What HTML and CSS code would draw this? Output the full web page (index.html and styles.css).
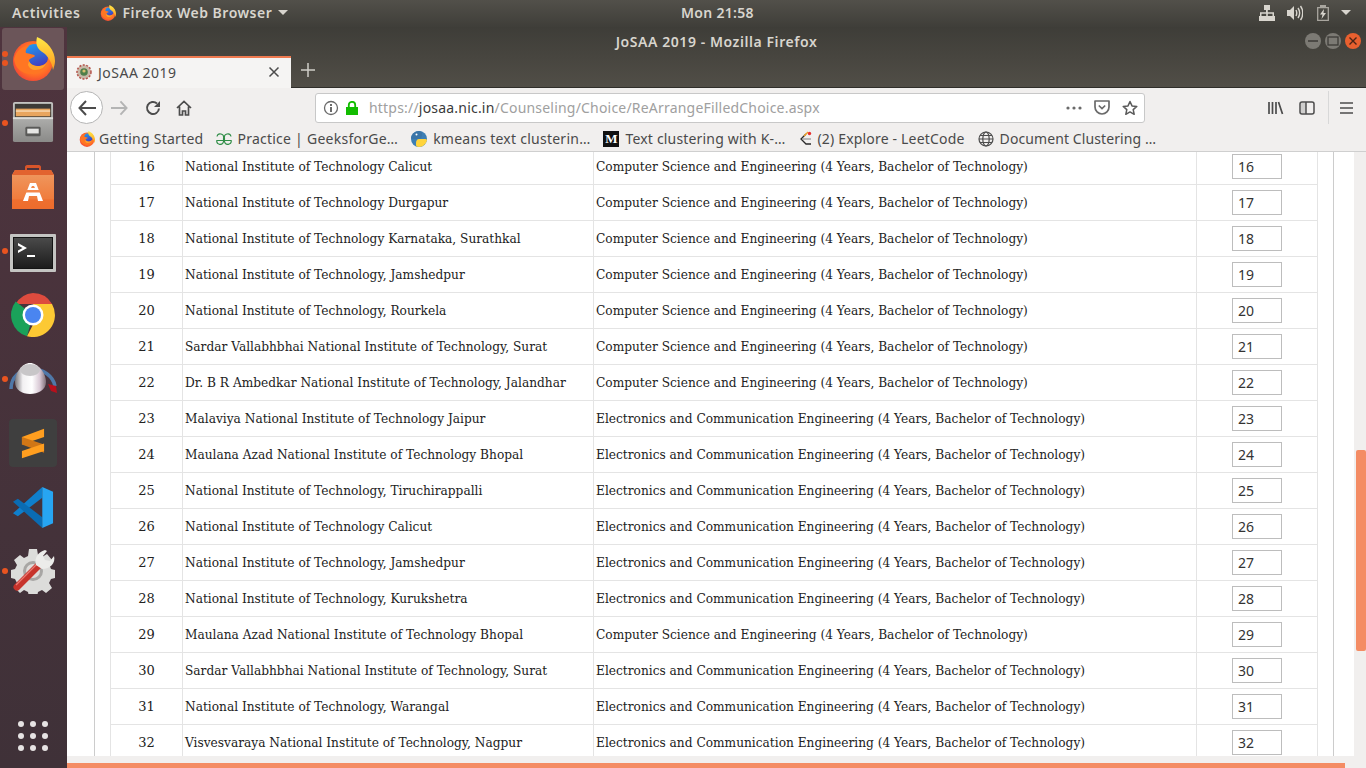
FILE: index.html
```html
<!DOCTYPE html>
<html lang="en">
<head>
<meta charset="utf-8">
<title>JoSAA 2019 - Mozilla Firefox</title>
<link rel="stylesheet" href="styles.css">
</head>
<body>
<svg class="defs" width="0" height="0" aria-hidden="true">
  <defs>
    <radialGradient id="fxO" cx="0.55" cy="0.45" r="0.7"><stop offset="0" stop-color="#ffb32c"/><stop offset="0.6" stop-color="#ff6a26"/><stop offset="1" stop-color="#e62f45"/></radialGradient>
    <linearGradient id="fxY" x1="0.5" y1="0" x2="0.5" y2="1"><stop offset="0" stop-color="#ffe847"/><stop offset="1" stop-color="#ff9a1f"/></linearGradient>
    <linearGradient id="fxB" x1="0.3" y1="0" x2="0.7" y2="1"><stop offset="0" stop-color="#1f9af0"/><stop offset="1" stop-color="#4a2fb5"/></linearGradient>
    <symbol id="firefox" viewBox="0 0 44 44">
      <circle cx="22" cy="24" r="20" fill="url(#fxO)"/>
      <circle cx="24" cy="20" r="13" fill="url(#fxB)"/>
      <path d="M26 0c10 4 18 13 18 24 0 3-1 6-2 9-1-7-4-12-8-16-2 -2-5-3-7-6-2-3-2-7-1-11z" fill="url(#fxY)"/>
      <path d="M3 22c2-8 8-13 15-13-2 2-4 4-3 7 3 1 8 1 9 3-2 2-6 2-6 5 1 4 6 6 11 5 4-1 7-3 8-6-1 8-8 14-17 14C11 37 4 31 3 22z" fill="#ff7623"/>
      <path d="M18 24c1 3 5 5 10 5 3 0 6-1 8-4-2 5-6 8-12 8-3 0-6-2-7-5z" fill="#ffa32a"/>
    </symbol>
    <symbol id="python" viewBox="0 0 16 16">
      <circle cx="8" cy="8" r="8" fill="#3d7fb4"/>
      <path d="M8 8h5.500c1.500 0 2.500.5 2.500 1-.5 3.500-4 7-8 7-2 0-3-1-3-2v-2c0-2 1-4 3-4z" fill="#ffd43b"/>
      <path d="M8 8H2.500C1 8 0 7.500 0 7c.5-4 4-7 8-7 2 0 3 1 3 2v2c0 2-1 4-3 4z" fill="#3a75a8"/>
      <circle cx="5.500" cy="3.500" r="1" fill="#fff"/>
    </symbol>
  </defs>
</svg>

<header class="panel">
  <div class="panel-left">
    <span class="activities">Activities</span>
    <span class="app-menu"><svg class="i16"><use href="#firefox"/></svg>Firefox Web Browser<i class="caret"></i></span>
  </div>
  <span class="clock">Mon 21:58</span>
  <div class="tray">
    <svg width="16" height="16" viewBox="0 0 16 16"><path fill="#d8d5ce" d="M5 0h6v5H8.800v2.200H15V11h1v5h-6v-5h3.500V8.700H8.800V11H11v5H5v-5h2.200V8.700H2.500V11H6v5H0v-5h1V7.200h6V5H5z"/></svg>
    <svg width="16" height="16" viewBox="0 0 16 16"><path fill="#d8d5ce" d="M0 5h3l4-4v14l-4-4H0z"/><path fill="none" stroke="#d8d5ce" stroke-width="1.400" d="M9 5c1 2 1 4 0 6M11 3c2 3 2 7 0 10M13.500 1c3 4 3 10 0 14"/></svg>
    <svg class="batt" width="12" height="16" viewBox="0 0 12 16"><path fill="none" stroke="#a9a69f" stroke-width="1.300" d="M.7 2.700h10.600v12.600H.7z"/><path fill="#a9a69f" d="M3 0h6v2H3z"/><path fill="#d8d5ce" d="M7 4 3 9.500h2.500L4.500 14 9 8H6.500z"/></svg>
    <i class="caret"></i>
  </div>
</header>

<div class="desktop">
  <nav class="dock">
    <div class="dock-item active"><i class="pip"></i><i class="pip pip2"></i>
      <svg class="i44"><use href="#firefox"/></svg></div>
    <div class="dock-item up"><i class="pip"></i>
      <svg width="42" height="42" viewBox="0 0 44 44"><defs><linearGradient id="cab" x1="0" y1="0" x2="0" y2="1"><stop offset="0" stop-color="#c4c4c2"/><stop offset="1" stop-color="#8a8a88"/></linearGradient></defs><rect x="1" y="1" width="42" height="42" rx="2" fill="url(#cab)"/><rect x="3" y="3" width="38" height="14" fill="#3d3a37"/><rect x="4" y="8" width="36" height="8" fill="#e8a55f"/><rect x="4" y="10" width="36" height="1" fill="#fff4e0"/><rect x="1" y="17" width="42" height="2" fill="#dcdcda"/><rect x="14" y="27" width="16" height="10" rx="1.500" fill="#5a5a58"/><rect x="16" y="29" width="12" height="5" fill="#e6e6e4"/></svg></div>
    <div class="dock-item">
      <svg width="42" height="44" viewBox="0 0 42 44"><defs><linearGradient id="bag" x1="0" y1="0" x2="0" y2="1"><stop offset="0" stop-color="#ef9a62"/><stop offset="0.75" stop-color="#f07c3c"/><stop offset="0.76" stop-color="#ee6f30"/><stop offset="1" stop-color="#ee6c2c"/></linearGradient></defs><path d="M13 7V2c0-1 1-2 2-2h12c1 0 2 1 2 2v5h-2V3H15v4z" fill="#d8552a"/><path d="M3 5h36l3 5v34H0V10z" fill="url(#bag)"/><path d="M0 10h42l-3-5H3z" fill="#e2632f"/><path d="M18 18h6l7 18h-5l-1-5H17l-1 5h-5z" fill="#fff"/><path d="M14 25h14v2.500H14z" fill="#f4874a"/><path d="M20 21h2l1 2h-4z" fill="#f4874a"/></svg></div>
    <div class="dock-item down"><i class="pip"></i>
      <svg width="46" height="38" viewBox="0 0 46 38"><defs><linearGradient id="term" x1="0" y1="0" x2="0" y2="1"><stop offset="0" stop-color="#4a4a4a"/><stop offset="1" stop-color="#1c1c1c"/></linearGradient></defs><rect width="46" height="38" rx="1" fill="#c4c4c2"/><rect x="3" y="3" width="40" height="32" fill="#141414"/><rect x="4" y="4" width="38" height="30" fill="url(#term)"/><path d="M8 9l9 5-9 5v-2.500L12.500 14 8 11.500z" fill="#fff"/><rect x="17" y="21" width="8" height="2" fill="#fff"/></svg></div>
    <div class="dock-item">
      <svg width="44" height="44" viewBox="0 0 44 44"><path d="M22 0a22 22 0 0 1 19 11H22L4.700 11A22 22 0 0 1 22 0z" fill="#dd4b3e"/><path d="M4.700 8.500 22 22 16 43.200A22 22 0 0 1 4.700 8.500z" fill="#1aa25a"/><path d="M41 11a22 22 0 0 1-25 32.200L27 22 22 11z" fill="#fcc934"/><circle cx="22" cy="22" r="10.500" fill="#fff"/><circle cx="22" cy="22" r="8" fill="#4a85f0"/></svg></div>
    <div class="dock-item"><i class="pip"></i>
      <svg width="50" height="36" viewBox="0 0 50 36"><defs><linearGradient id="knob" x1="0" y1="0" x2="1" y2="0"><stop offset="0" stop-color="#77757a"/><stop offset="0.25" stop-color="#f2f0f2"/><stop offset="0.55" stop-color="#ffffff"/><stop offset="0.8" stop-color="#d8c8d4"/><stop offset="1" stop-color="#7e7078"/></linearGradient></defs><path d="M3 28C3 16 12 8 24 8c11 0 21 7 23 17" fill="none" stroke="#4f78a8" stroke-width="3.500"/><path d="M40 23l8 2 1 7-6-2z" fill="#b8101c"/><path d="M7 21c0-9 7-19 15-19s16 10 16 19c0 8-8 12-16 12S7 29 7 21z" fill="url(#knob)"/><ellipse cx="22" cy="9" rx="10" ry="6" fill="#c8c6c8"/></svg></div>
    <div class="dock-item">
      <div class="sublime"><svg width="24" height="31" viewBox="0 0 26 32"><path d="M25 0v9L1 17V9z" fill="#ff9e1f"/><path d="M1 9l24 8v9L1 17z" fill="#d07616"/><path d="M25 16v8L1 32v-8z" fill="#ff9e1f"/></svg></div></div>
    <div class="dock-item">
      <svg width="43" height="43" viewBox="0 0 44 44"><path d="M31 1v11L6 31l-5-3z" fill="#0f7fcc"/><path d="M1 16l5-3 25 19v11z" fill="#0a6cb3"/><path d="M31 1 42 6v32l-11 5z" fill="#27a5f2"/></svg></div>
    <div class="dock-item"><i class="pip"></i>
      <svg width="46" height="46" viewBox="0 0 46 46"><path d="M19 1h8l1 6 4 2 5-3 5 6-3 4 2 5 4 1v8l-4 1-2 4 3 5-6 5-4-3-4 2-1 5h-8l-1-5-4-2-4 3-6-6 3-4-2-4-4-1v-8l4-1 2-4-3-5 6-5 4 3 4-2z" fill="#dcdcda"/><circle cx="23" cy="23" r="10" fill="#a8a6a4"/><circle cx="23" cy="23" r="7" fill="#dedcda"/><path d="M7 39 29 17" stroke="#c7332b" stroke-width="7" stroke-linecap="round"/><path d="M6 37 27 16" stroke="#ea7a72" stroke-width="1.300"/><path d="M26 17c-2-7 2-13 9-15l2 1-4 5 2 4 5 1 4-5c2 7-4 13-12 13z" fill="#ececea"/></svg></div>
    <div class="apps-grid"><i></i><i></i><i></i><i></i><i></i><i></i><i></i><i></i><i></i></div>
  </nav>

  <div class="window">
    <div class="titlebar">
      <span class="wintitle">JoSAA 2019 - Mozilla Firefox</span>
      <div class="winbtns">
        <span class="wb"><svg width="16" height="16" viewBox="0 0 16 16"><path d="M3 8h10" stroke="#3c3b37" stroke-width="1.500"/></svg></span>
        <span class="wb"><svg width="16" height="16" viewBox="0 0 16 16"><rect x="3" y="4" width="10" height="8" fill="none" stroke="#3c3b37" stroke-width="1.300"/></svg></span>
        <span class="wb close"><svg width="16" height="16" viewBox="0 0 16 16"><path d="M4.500 4.500l7 7M11.500 4.500l-7 7" stroke="#4a2416" stroke-width="1.400"/></svg></span>
      </div>
    </div>
    <div class="tabstrip">
      <div class="tab">
        <svg class="fav" width="16" height="16" viewBox="0 0 16 16"><circle cx="8" cy="8" r="7" fill="#c9b8a8"/><circle cx="8" cy="8" r="7" fill="none" stroke="#b5524a" stroke-width="1.500" stroke-dasharray="2 1.500"/><circle cx="8" cy="8" r="3.800" fill="#4f7f4a"/><circle cx="8" cy="7" r="1.600" fill="#d9c070"/></svg>
        <span class="tab-title">JoSAA 2019</span>
        <svg class="tab-x" width="12" height="12" viewBox="0 0 12 12"><path d="M1.500 1.500l9 9M10.500 1.500l-9 9" stroke="#4c4c4c" stroke-width="1.500"/></svg>
      </div>
      <svg class="newtab" width="14" height="14" viewBox="0 0 14 14"><path d="M7 0v14M0 7h14" stroke="#d0cec8" stroke-width="1.500"/></svg>
    </div>
    <div class="navbar">
      <span class="back"><svg width="18" height="16" viewBox="0 0 18 16"><path d="M8 1 1.500 8 8 15M2 8h16" fill="none" stroke="#4c4c4c" stroke-width="2"/></svg></span>
      <svg class="fwd" width="17" height="16" viewBox="0 0 18 16"><path d="M10 1l6.500 7L10 15M16 8H0" fill="none" stroke="#b4b4b4" stroke-width="2"/></svg>
      <svg class="reload" width="16" height="16" viewBox="0 0 16 16"><path d="M14 8.500A6 6 0 1 1 12 3.500" fill="none" stroke="#4c4c4c" stroke-width="2"/><path d="M15 1v6H9z" fill="#4c4c4c"/></svg>
      <svg class="home" width="16" height="16" viewBox="0 0 16 16"><path d="M1 8 8 1.500 15 8M3.500 6.500V15h3v-4h3v4h3V6.500" fill="none" stroke="#4c4c4c" stroke-width="1.700"/></svg>
      <div class="urlbar">
        <svg class="info" width="16" height="16" viewBox="0 0 16 16"><circle cx="8" cy="8" r="6.500" fill="none" stroke="#6a6a6a" stroke-width="1.300"/><path d="M7 7h2v5H7zM7 4h2v2H7z" fill="#6a6a6a"/></svg>
        <svg class="lock" width="12" height="14" viewBox="0 0 12 14"><path d="M0 6h12v8H0z" fill="#12bc00"/><path d="M2.800 6.500V4a3.200 3.200 0 0 1 6.400 0v2.500" fill="none" stroke="#12bc00" stroke-width="1.800"/></svg>
        <span class="url"><span class="url-dim">https://</span><span class="url-host">josaa.nic.in</span><span class="url-dim">/Counseling/Choice/ReArrangeFilledChoice.aspx</span></span>
        <svg class="more" width="16" height="4" viewBox="0 0 16 4"><circle cx="2" cy="2" r="1.600" fill="#6a6a6a"/><circle cx="8" cy="2" r="1.600" fill="#6a6a6a"/><circle cx="14" cy="2" r="1.600" fill="#6a6a6a"/></svg>
        <svg class="pocket" width="16" height="15" viewBox="0 0 16 15"><path d="M1 1h14v6a7 7 0 0 1-14 0z" fill="none" stroke="#6a6a6a" stroke-width="1.700" stroke-linejoin="round"/><path d="M4.800 5.500 8 8.500l3.200-3" fill="none" stroke="#6a6a6a" stroke-width="1.700"/></svg>
        <svg class="star" width="16" height="16" viewBox="0 0 16 16"><path d="M8 1.500l2 4.400 4.800.5-3.600 3.200 1 4.700L8 11.900l-4.200 2.400 1-4.700L1.200 6.400 6 5.900z" fill="none" stroke="#5a5a5a" stroke-width="1.500" stroke-linejoin="round"/></svg>
      </div>
      <div class="nav-right">
        <svg width="16" height="14" viewBox="0 0 16 14"><path d="M1 1v12M4.500 1v12M8 1v12M10.500 1l4 12" fill="none" stroke="#4c4c4c" stroke-width="1.700"/></svg>
        <svg width="16" height="14" viewBox="0 0 16 14"><rect x="1" y="1" width="14" height="12" rx="2" fill="none" stroke="#4c4c4c" stroke-width="1.500"/><path d="M2 2h5v10H2z" fill="#4c4c4c" opacity="0.2"/><path d="M7 1v12" stroke="#4c4c4c" stroke-width="1.500"/></svg>
        <i class="nav-sep"></i>
        <svg width="13" height="12" viewBox="0 0 13 12"><path d="M0 1h13M0 6h13M0 11h13" stroke="#4c4c4c" stroke-width="1.700"/></svg>
      </div>
    </div>
    <div class="bookmarks">
      <span class="bm"><svg class="i16"><use href="#firefox"/></svg>Getting Started</span>
      <span class="bm bm-5"><svg width="16" height="16" viewBox="0 0 16 16"><g fill="none" stroke="#2f8d46" stroke-width="1.100"><path d="M1 5.500A3.300 3.300 0 0 1 7.500 7v3.500A3.300 3.300 0 0 1 .8 9.500H7"/><path d="M15 5.500A3.300 3.300 0 0 0 8.500 7v3.500a3.300 3.300 0 0 0 6.700-1H9"/></g></svg>Practice | GeeksforGe…</span>
      <span class="bm bm-6"><svg class="i16"><use href="#python"/></svg>kmeans text clusterin…</span>
      <span class="bm bm-6 bm-snug"><span class="medium">M</span>Text clustering with K-…</span>
      <span class="bm bm-3 bm-snug"><svg width="16" height="16" viewBox="0 0 16 16"><path d="M8 3 3 8l5 5h5" fill="none" stroke="#2a2a2a" stroke-width="1.300"/><path d="M5 8h8" stroke="#999" stroke-width="1.300"/><path d="M10 1 6 5" stroke="#f0a020" stroke-width="1.300"/><circle cx="11.500" cy="2.500" r="1.700" fill="#e83030"/></svg>(2) Explore - LeetCode</span>
      <span class="bm bm-6 bm-tight"><svg width="16" height="16" viewBox="0 0 16 16"><g fill="none" stroke="#4c4c4c" stroke-width="1.200"><circle cx="8" cy="8" r="7"/><ellipse cx="8" cy="8" rx="3.200" ry="7"/><path d="M1 8h14M2 4.500h12M2 11.500h12"/></g></svg>Document Clustering …</span>
    </div>
    <div class="viewport">
      <div class="page">
        <div class="panel-box">
          <table class="choices">
            <colgroup><col class="c-no"><col class="c-inst"><col class="c-prog"><col class="c-pri"></colgroup>
            <tbody>
              <tr><td class="no">16</td><td>National Institute of Technology Calicut</td><td>Computer Science and Engineering (4 Years, Bachelor of Technology)</td><td class="pri"><span class="box">16</span></td></tr>
              <tr><td class="no">17</td><td>National Institute of Technology Durgapur</td><td>Computer Science and Engineering (4 Years, Bachelor of Technology)</td><td class="pri"><span class="box">17</span></td></tr>
              <tr><td class="no">18</td><td>National Institute of Technology Karnataka, Surathkal</td><td>Computer Science and Engineering (4 Years, Bachelor of Technology)</td><td class="pri"><span class="box">18</span></td></tr>
              <tr><td class="no">19</td><td>National Institute of Technology, Jamshedpur</td><td>Computer Science and Engineering (4 Years, Bachelor of Technology)</td><td class="pri"><span class="box">19</span></td></tr>
              <tr><td class="no">20</td><td>National Institute of Technology, Rourkela</td><td>Computer Science and Engineering (4 Years, Bachelor of Technology)</td><td class="pri"><span class="box">20</span></td></tr>
              <tr><td class="no">21</td><td>Sardar Vallabhbhai National Institute of Technology, Surat</td><td>Computer Science and Engineering (4 Years, Bachelor of Technology)</td><td class="pri"><span class="box">21</span></td></tr>
              <tr><td class="no">22</td><td>Dr. B R Ambedkar National Institute of Technology, Jalandhar</td><td>Computer Science and Engineering (4 Years, Bachelor of Technology)</td><td class="pri"><span class="box">22</span></td></tr>
              <tr><td class="no">23</td><td>Malaviya National Institute of Technology Jaipur</td><td>Electronics and Communication Engineering (4 Years, Bachelor of Technology)</td><td class="pri"><span class="box">23</span></td></tr>
              <tr><td class="no">24</td><td>Maulana Azad National Institute of Technology Bhopal</td><td>Electronics and Communication Engineering (4 Years, Bachelor of Technology)</td><td class="pri"><span class="box">24</span></td></tr>
              <tr><td class="no">25</td><td>National Institute of Technology, Tiruchirappalli</td><td>Electronics and Communication Engineering (4 Years, Bachelor of Technology)</td><td class="pri"><span class="box">25</span></td></tr>
              <tr><td class="no">26</td><td>National Institute of Technology Calicut</td><td>Electronics and Communication Engineering (4 Years, Bachelor of Technology)</td><td class="pri"><span class="box">26</span></td></tr>
              <tr><td class="no">27</td><td>National Institute of Technology, Jamshedpur</td><td>Electronics and Communication Engineering (4 Years, Bachelor of Technology)</td><td class="pri"><span class="box">27</span></td></tr>
              <tr><td class="no">28</td><td>National Institute of Technology, Kurukshetra</td><td>Electronics and Communication Engineering (4 Years, Bachelor of Technology)</td><td class="pri"><span class="box">28</span></td></tr>
              <tr><td class="no">29</td><td>Maulana Azad National Institute of Technology Bhopal</td><td>Computer Science and Engineering (4 Years, Bachelor of Technology)</td><td class="pri"><span class="box">29</span></td></tr>
              <tr><td class="no">30</td><td>Sardar Vallabhbhai National Institute of Technology, Surat</td><td>Electronics and Communication Engineering (4 Years, Bachelor of Technology)</td><td class="pri"><span class="box">30</span></td></tr>
              <tr><td class="no">31</td><td>National Institute of Technology, Warangal</td><td>Electronics and Communication Engineering (4 Years, Bachelor of Technology)</td><td class="pri"><span class="box">31</span></td></tr>
              <tr><td class="no">32</td><td>Visvesvaraya National Institute of Technology, Nagpur</td><td>Electronics and Communication Engineering (4 Years, Bachelor of Technology)</td><td class="pri"><span class="box">32</span></td></tr>
            </tbody>
          </table>
        </div>
      </div>
      <div class="scrollbar"><i class="thumb"></i></div>
    </div>
    <div class="hbar"><i class="hthumb"></i></div>
  </div>
</div>
</body>
</html>
```

FILE: styles.css
```css
* { box-sizing: border-box; }
html, body { margin: 0; padding: 0; height: 100%; overflow: hidden; }
body {
  width: 1366px; height: 768px; display: flex; flex-direction: column;
  font-family: "Noto Sans", "Open Sans", sans-serif; background: #3c3b37;
}
i { display: block; font-style: normal; }
svg { display: block; flex: none; }
.defs { position: absolute; }
.i16 { width: 16px; height: 16px; }
.i44 { width: 44px; height: 44px; }

.panel {
  height: 27px; flex: none; display: flex; align-items: center; justify-content: space-between;
  position: relative; padding: 0 15px 2px 12px; color: #d8d5ce;
  background: linear-gradient(#52504a, #3f3e39); font-size: 14px; font-weight: 600; letter-spacing: .3px;
}
.panel-left { display: flex; align-items: center; gap: 20px; }
.activities { letter-spacing: .6px; }
.app-menu { display: flex; align-items: center; gap: 6px; letter-spacing: .5px; }
.caret { width: 0; height: 0; border-left: 5px solid transparent; border-right: 5px solid transparent; border-top: 5px solid #d8d5ce; }
.clock { position: absolute; left: 681px; top: 3px; }
.tray { display: flex; align-items: center; gap: 12px; }
.tray .batt { margin-left: 2px; }

.desktop { flex: 1; display: flex; min-height: 0; }
.dock {
  width: 67px; flex: none; display: flex; flex-direction: column; align-items: flex-start;
  padding: 1px 0 0 2px; position: relative; background: linear-gradient(#4f343e, #3f3138);
}
.dock-item { width: 62px; height: 62px; margin-bottom: 2px; display: flex; align-items: center; justify-content: center; position: relative; flex: none; border-radius: 3px; }
.dock-item.active { background: #6b5559; }
.dock-item.up svg { margin-bottom: 2px; }
.dock-item.down svg { margin-top: 4px; }
.pip { position: absolute; left: 0; top: 28px; width: 6px; height: 6px; border-radius: 50%; background: #e95420; }
.dock-item.active .pip { top: 23px; }
.dock-item.active .pip2 { top: 32px; }
.sublime { width: 48px; height: 48px; border-radius: 4px; background: #3f3f3f; display: flex; align-items: center; justify-content: center; }
.apps-grid { position: absolute; left: 18px; bottom: 17px; display: grid; grid-template-columns: repeat(3, 6px); gap: 6px; }
.apps-grid i { width: 6px; height: 6px; border-radius: 50%; background: #e6e3e3; }

.window { flex: 1; min-width: 0; display: flex; flex-direction: column; background: #f1efee; }
.titlebar {
  height: 29px; flex: none; display: flex; align-items: center; justify-content: center; position: relative;
  background: linear-gradient(#3e3d38, #47453f); color: #d8d5ce; font-size: 14px; font-weight: 600;
}
.wintitle { letter-spacing: .57px; }
.winbtns { position: absolute; right: 5px; top: 6px; display: flex; gap: 4px; }
.wb { width: 16px; height: 16px; border-radius: 50%; background: #7c7a74; }
.wb.close { background: #e9602f; }
.tabstrip {
  height: 32px; flex: none; display: flex; align-items: stretch;
  background: linear-gradient(#47453f, #514e47); border-bottom: 1px solid #2f2e2a;
}
.tab {
  width: 224px; margin-bottom: -1px; display: flex; align-items: center; background: #f5f4f3;
  border-top: 2px solid #ef7a50; padding: 0 11px 2px 9px; color: #4a4a4a; font-size: 14px;
}
.fav { margin-right: 6px; }
.tab-title { flex: 1; letter-spacing: .5px; }
.newtab { margin: 7px 0 0 10px; }
.navbar { height: 37px; flex: none; display: flex; align-items: center; padding: 2px 13px 0 3px; background: #f1efee; }
.back {
  width: 33px; height: 33px; border-radius: 50%; background: #fff; border: 1px solid #b5b5b5;
  display: flex; align-items: center; justify-content: center; flex: none;
}
.fwd { margin-left: 8px; }
.reload { margin-left: 17px; }
.home { margin-left: 15px; }
.urlbar {
  width: 830px; height: 30px; margin-left: 123px; display: flex; align-items: center;
  background: #fff; border: 1px solid #c8c8c8; border-radius: 3px; padding: 0 6px 0 7px;
}
.lock { margin-left: 7px; }
.url { flex: 1; margin-left: 11px; font-size: 14px; white-space: nowrap; letter-spacing: .2px; }
.url-dim { color: #a0a0a0; }
.url-host { color: #3a3a3a; }
.more { margin-right: 12px; }
.pocket { margin-right: 12px; }
.nav-right { margin-left: auto; display: flex; align-items: center; gap: 15px; }
.nav-sep { width: 1px; height: 33px; background: #d8d8d8; margin: 0 -4px 0 -2px; }
.bookmarks {
  height: 27px; flex: none; display: flex; align-items: center; gap: 13px; padding: 1px 0 0 12px;
  background: #f1efee; border-bottom: 1px solid #cfcfcf; color: #4a4a4a; font-size: 14px; letter-spacing: .25px; white-space: nowrap;
}
.bm { display: flex; align-items: center; gap: 4px; }
.bm-3 { gap: 3px; }
.bm-5 { gap: 5px; }
.bm-6 { gap: 6px; }
.bm-snug { letter-spacing: .18px; }
.bm-tight { letter-spacing: .1px; }
.medium { width: 16px; height: 16px; background: #111; color: #fff; font-family: "Liberation Serif", serif; font-weight: 700; font-size: 13px; line-height: 16px; text-align: center; letter-spacing: 0; }

.viewport { flex: 1; min-height: 0; display: flex; background: #fff; overflow: hidden; }
.page { flex: 1; min-width: 0; padding: 0 20px 0 27px; }
.panel-box { height: 100%; overflow: hidden; border-left: 1px solid #ccc; border-right: 1px solid #ccc; padding: 0 15px; }
.choices {
  width: 1208px; margin-top: -4px; table-layout: fixed; border-collapse: collapse;
  font-family: "DejaVu Serif", serif; font-size: 12.2px; color: #222;
}
.c-no { width: 72px; }
.c-inst { width: 411px; }
.c-prog { width: 603px; }
.c-pri { width: 121px; }
.choices td { height: 36px; padding: 0 2px; border: 1px solid #e4e4e4; white-space: nowrap; }
.choices td.no { text-align: center; font-size: 13px; padding: 0; }
.choices td.pri { padding: 0 0 0 35px; }
.box {
  display: block; width: 50px; height: 25px; border: 1px solid #bdbdbd; padding-left: 5px;
  font-family: "Noto Sans", sans-serif; font-size: 14px; line-height: 23px; color: #333;
}
.scrollbar { width: 12px; flex: none; background: #f1efee; position: relative; }
.thumb { position: absolute; left: 2px; right: 0; top: 298px; height: 201px; background: #f48c64; border-radius: 2px; }
.hbar { height: 12px; flex: none; padding-top: 7px; background: #f1efee; }
.hthumb { height: 5px; width: 1278px; background: #f48c64; }
```
